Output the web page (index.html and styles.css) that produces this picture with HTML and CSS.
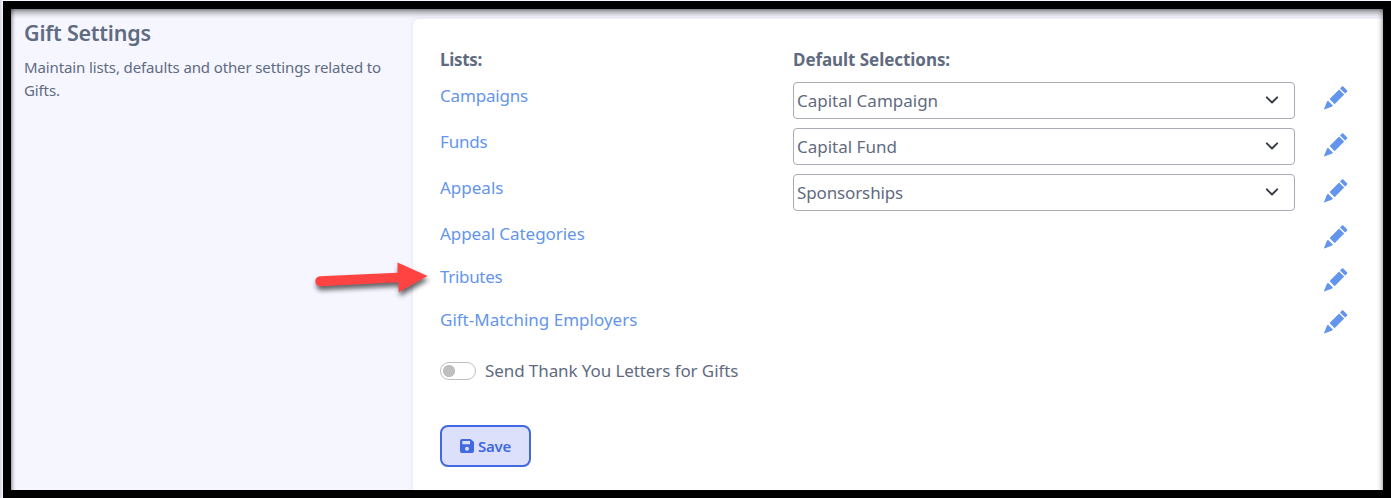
FILE: index.html
```html
<!DOCTYPE html>
<html lang="en">
<head>
    <meta charset="UTF-8">
    <meta name="viewport" content="width=device-width, initial-scale=1.0">
    <title>Gift Settings</title>
    <link rel="stylesheet" href="styles.css">
</head>
<body>
    <!-- shared icons -->
    <svg class="icon-defs" width="0" height="0">
        <symbol id="pencil" viewBox="0 0 24 24">
            <path d="M16 2.4 17.9.5Q18.6-.2 19.3.5L23 4.3Q23.6 5 23 5.7L21.1 7.6ZM5.6 13.1 15.1 3.4 20.2 8.5 10.6 18.2ZM4 14.7 8.9 19.6 7.7 20.7.2 23.4Q-.1 23.4 0 23L2.9 15.8Z"/>
        </symbol>
        <symbol id="chevron" viewBox="0 0 16 16">
            <path d="M2.8 5.3 8 10.5l5.2-5.2" fill="none" stroke="#343a40" stroke-width="1.9" stroke-linecap="round" stroke-linejoin="round"/>
        </symbol>
    </svg>

    <div class="frame">
        <aside class="sidebar">
            <h1>Gift Settings</h1>
            <p>Maintain lists, defaults and other settings related to<br>Gifts.</p>
        </aside>

        <main class="panel">
            <div class="row heading">
                <strong class="lists-title">Lists:</strong>
                <strong class="defaults-title">Default Selections:</strong>
            </div>
            <div class="row">
                <a class="campaigns" href="#">Campaigns</a>
                <button type="button" class="select"><span>Capital Campaign</span><svg class="chevron"><use href="#chevron"/></svg></button>
                <svg class="pencil first"><use href="#pencil"/></svg>
            </div>
            <div class="row">
                <a class="funds" href="#">Funds</a>
                <button type="button" class="select"><span>Capital Fund</span><svg class="chevron"><use href="#chevron"/></svg></button>
                <svg class="pencil"><use href="#pencil"/></svg>
            </div>
            <div class="row">
                <a class="appeals" href="#">Appeals</a>
                <button type="button" class="select"><span class="sponsorships">Sponsorships</span><svg class="chevron"><use href="#chevron"/></svg></button>
                <svg class="pencil"><use href="#pencil"/></svg>
            </div>
            <div class="row short">
                <a class="categories" href="#">Appeal Categories</a>
                <span></span>
                <svg class="pencil"><use href="#pencil"/></svg>
            </div>
            <div class="row short">
                <a class="tributes" href="#">Tributes</a>
                <span></span>
                <svg class="pencil"><use href="#pencil"/></svg>
            </div>
            <div class="row short">
                <a class="employers" href="#">Gift-Matching Employers</a>
                <span></span>
                <svg class="pencil last"><use href="#pencil"/></svg>
            </div>

            <label class="switch">
                <input type="checkbox">
                <span class="switch-label">Send Thank You Letters for Gifts</span>
            </label>

            <button type="button" class="save">
                <svg viewBox="0 0 14 14">
                    <path fill-rule="evenodd" d="M2 0H10.5L14 3V12Q14 14 12 14H2Q0 14 0 12V2Q0 0 2 0ZM2.3 2V5.2H10V2ZM7 7.7A2 2 0 1 0 7 11.7A2 2 0 1 0 7 7.7Z"/>
                </svg>
                <span class="save-label">Save</span>
            </button>
        </main>
    </div>

    <svg class="arrow" viewBox="0 0 130 50">
        <path d="M10 21.2 87.5 17.8V7.6L117.5 21 88.8 37.2 88.3 27.2 10.5 31.2A5 5 0 0 1 10 21.2Z"/>
    </svg>
</body>
</html>
```

FILE: styles.css
```css
* {
    box-sizing: border-box;
}

body {
    margin: 0;
    padding: 1px 0 0 3px;
    height: 498px;
    overflow: hidden;
    background: linear-gradient(90deg, #d5d5dd, #f5f6ff 3px);
    font-family: "Noto Sans", "Open Sans", sans-serif;
    font-size: 17px;
    color: #5f6b80;
}

.icon-defs {
    position: absolute;
}

.frame {
    position: relative;
    display: flex;
    height: 497px;
    border: 8px solid #000;
    background-color: #f5f6ff;
}

/* shadow cast inwards by the frame */
.frame::after {
    content: "";
    position: absolute;
    inset: 0;
    pointer-events: none;
    background:
        linear-gradient(180deg, rgba(0, 0, 0, 0.48), rgba(0, 0, 0, 0.24) 3px, rgba(0, 0, 0, 0.06) 7px, transparent 10px),
        linear-gradient(90deg, rgba(0, 0, 0, 0.32), rgba(0, 0, 0, 0.07) 3px, transparent 5px),
        linear-gradient(270deg, rgba(0, 0, 0, 0.26), rgba(0, 0, 0, 0.07) 3px, transparent 6px);
}

.sidebar {
    width: 402px;
    padding: 11px 0 0 13px;
}

.sidebar h1 {
    margin: 0;
    font-size: 21.5px;
    line-height: 26px;
    font-weight: 600;
    white-space: nowrap;
    letter-spacing: -0.22px;
}

.sidebar p {
    margin: 10px 0 0;
    font-size: 15px;
    line-height: 23px;
    white-space: nowrap;
    letter-spacing: -0.12px;
}

.panel {
    flex: 1;
    margin-top: 10px;
    padding: 27px 0 0 27px;
    background-color: #fff;
    border-radius: 6px 0 0 0;
    box-shadow: 0 0 4px rgba(90, 90, 160, 0.12);
}

.row {
    display: grid;
    grid-template-columns: 353px 502px 24px;
    height: 46px;
    align-items: start;
    white-space: nowrap;
}

.row.heading {
    height: 36px;
    line-height: 28px;
}

.lists-title {
    letter-spacing: -0.3px;
}

.defaults-title {
    letter-spacing: -0.06px;
}

.row.short {
    height: 43px;
}

.row a {
    color: #6495ed;
    text-decoration: none;
    line-height: 28px;
}

.row .campaigns,
.row .funds {
    letter-spacing: -0.18px;
}

.row .categories {
    letter-spacing: -0.05px;
}

.row .tributes {
    letter-spacing: -0.32px;
}

.pencil {
    width: 24px;
    height: 24px;
    margin: 5px 0 0 29px;
    fill: #6495ed;
    overflow: visible;
}

.pencil.first,
.pencil.last {
    margin-top: 4px;
}

.select {
    display: flex;
    justify-content: space-between;
    align-items: center;
    height: 37px;
    padding: 0 14px 0 3px;
    border: 1px solid #a9abb5;
    border-radius: 4px;
    background-color: #fff;
    color: inherit;
    font: inherit;
}

.select .sponsorships {
    letter-spacing: -0.13px;
}

.chevron {
    width: 16px;
    height: 16px;
    margin-top: -2px;
}

.switch {
    display: flex;
    align-items: center;
    gap: 9px;
    height: 24px;
    margin-top: 10px;
}

.switch input {
    appearance: none;
    width: 36px;
    height: 18px;
    margin: 0;
    border: 1px solid #bfbfbf;
    border-radius: 9px;
    background: radial-gradient(circle at 8px 8px, #bfbfbf 5.7px, #fff 6.3px);
}

.switch-label {
    margin-top: -2px;
    letter-spacing: -0.09px;
}

.save {
    display: flex;
    align-items: center;
    justify-content: center;
    gap: 4px;
    width: 91px;
    height: 42px;
    margin-top: 42px;
    padding: 0;
    border: 2px solid #4169e1;
    border-radius: 8px;
    background-color: #dce0fb;
    color: #4169e1;
    font: inherit;
    font-size: 15px;
    font-weight: 600;
    letter-spacing: -0.2px;
}

.save svg {
    width: 14px;
    height: 14px;
    fill: currentColor;
}

.arrow {
    position: absolute;
    left: 310px;
    top: 255px;
    width: 130px;
    height: 50px;
    overflow: visible;
    fill: #ff4343;
    filter: drop-shadow(1px 4px 2.5px rgba(0, 0, 0, 0.6));
}
```
